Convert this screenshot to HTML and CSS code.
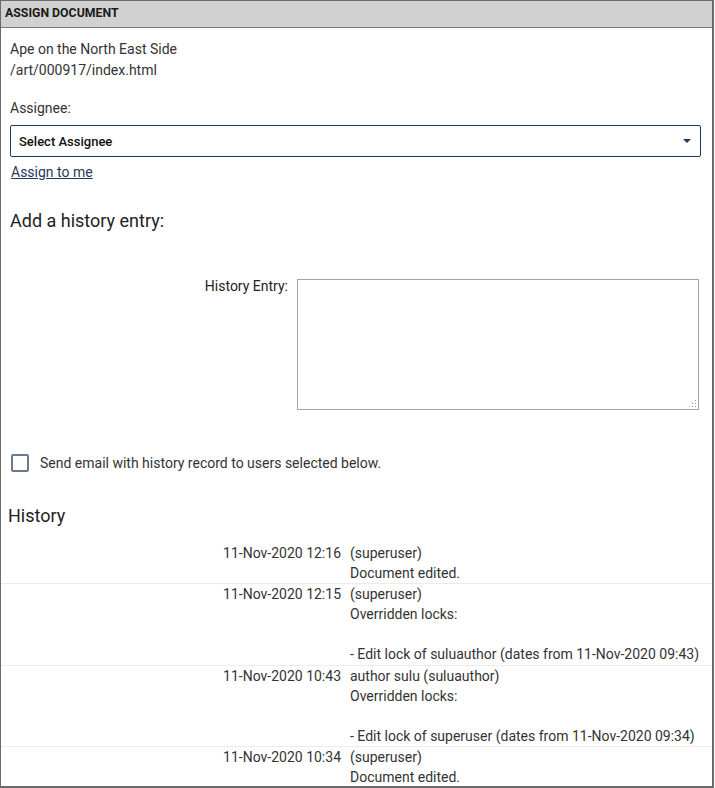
FILE: index.html
```html
<!DOCTYPE html>
<html>
<head>
<meta charset="utf-8">
<link rel="stylesheet" href="styles.css">
</head>
<body>
<div class="panel">
  <div class="panel-header">ASSIGN DOCUMENT</div>
  <div class="panel-body">
    <div class="doc-info">
      <div>Ape on the North East Side</div>
      <div>/art/000917/index.html</div>
    </div>
    <div class="field-label">Assignee:</div>
    <div class="select">
      <span>Select Assignee</span>
      <span class="caret"></span>
    </div>
    <a class="assign-link" href="#">Assign to me</a>
    <h2 class="section-title">Add a history entry:</h2>
    <div class="entry-row">
      <label class="entry-label">History Entry:</label>
      <div class="textarea"><span class="grip"></span></div>
    </div>
    <div class="check-row">
      <span class="checkbox"></span>
      <span>Send email with history record to users selected below.</span>
    </div>
  </div>
  <h2 class="history-title">History</h2>
  <div class="history">
    <div class="h-row">
      <div class="h-date">11-Nov-2020 12:16</div>
      <div class="h-text">(superuser)<br>Document edited.</div>
    </div>
    <div class="h-row">
      <div class="h-date">11-Nov-2020 12:15</div>
      <div class="h-text">(superuser)<br>Overridden locks:<br><br>- Edit lock of suluauthor (dates from 11-Nov-2020 09:43)</div>
    </div>
    <div class="h-row">
      <div class="h-date">11-Nov-2020 10:43</div>
      <div class="h-text">author sulu (suluauthor)<br>Overridden locks:<br><br>- Edit lock of superuser (dates from 11-Nov-2020 09:34)</div>
    </div>
    <div class="h-row">
      <div class="h-date">11-Nov-2020 10:34</div>
      <div class="h-text">(superuser)<br>Document edited.</div>
    </div>
  </div>
</div>
</body>
</html>
```

FILE: styles.css
```css
html, body {
  margin: 0;
  padding: 0;
  background: #fff;
}
body {
  font-family: Roboto, "Liberation Sans", sans-serif;
  font-size: 14px;
  color: #333;
}
.panel {
  width: 714px;
  height: 788px;
  box-sizing: border-box;
  border: 1px solid #6a6a6a;
  border-bottom-width: 2px;
  border-right-width: 2px;
  overflow: hidden;
}
.panel-header {
  height: 27px;
  box-sizing: border-box;
  background: #d1d1d1;
  border-bottom: 1px solid #7a7a7a;
  padding: 5px 0 0 4px;
  font-size: 12.3px;
  font-weight: 700;
  color: #1a1a1a;
}
.panel-body {
  padding: 11px 11px 0 9px;
}
.doc-info {
  line-height: 21px;
}
.field-label {
  margin-top: 17px;
  line-height: 20px;
}
.select {
  margin-top: 7px;
  height: 32px;
  box-sizing: border-box;
  border: 1px solid #1f3a5a;
  border-radius: 2px;
  display: flex;
  align-items: center;
  justify-content: space-between;
  padding: 0 9px 0 8px;
  color: #111;
  font-size: 13px;
  font-weight: 500;
}
.caret {
  width: 0;
  height: 0;
  border-left: 4px solid transparent;
  border-right: 4px solid transparent;
  border-top: 4px solid #1f3a5f;
}
.assign-link {
  display: inline-block;
  margin-top: 5px;
  margin-left: 1px;
  line-height: 20px;
  color: #1f3a5a;
  font-size: 14px;
  text-decoration: underline;
}
.section-title {
  margin: 27px 0 0 0;
  font-size: 18px;
  font-weight: 400;
  color: #222;
  line-height: 24px;
}
.entry-row {
  display: flex;
  margin-top: 46px;
}
.entry-label {
  width: 278px;
  text-align: right;
  line-height: 15px;
  color: #222;
}
.textarea {
  margin-left: 9px;
  width: 402px;
  height: 131px;
  box-sizing: border-box;
  border: 1px solid #a5a5a5;
  position: relative;
}
.grip {
  position: absolute;
  right: 2px;
  bottom: 2px;
  width: 8px;
  height: 8px;
  background:
    radial-gradient(circle, #999 0.7px, transparent 1px) 0 0 / 3px 3px;
  clip-path: polygon(100% 0, 100% 100%, 0 100%);
}
.check-row {
  display: flex;
  align-items: center;
  margin-top: 44px;
  margin-left: 1px;
  gap: 11px;
  color: #333;
}
.checkbox {
  width: 18px;
  height: 18px;
  box-sizing: border-box;
  border: 2px solid #6c7a8e;
  border-radius: 2px;
  flex: none;
}
.history-title {
  margin: 32px 0 0 7px;
  font-size: 18px;
  font-weight: 400;
  color: #222;
  line-height: 24px;
}
.history {
  margin-top: 15px;
}
.h-row {
  display: grid;
  grid-template-columns: 340px 1fr;
  column-gap: 9px;
  line-height: 20.1px;
  border-bottom: 1px solid #ececec;
}
.h-row:last-child {
  border-bottom: none;
}
.h-date {
  text-align: right;
}
```
